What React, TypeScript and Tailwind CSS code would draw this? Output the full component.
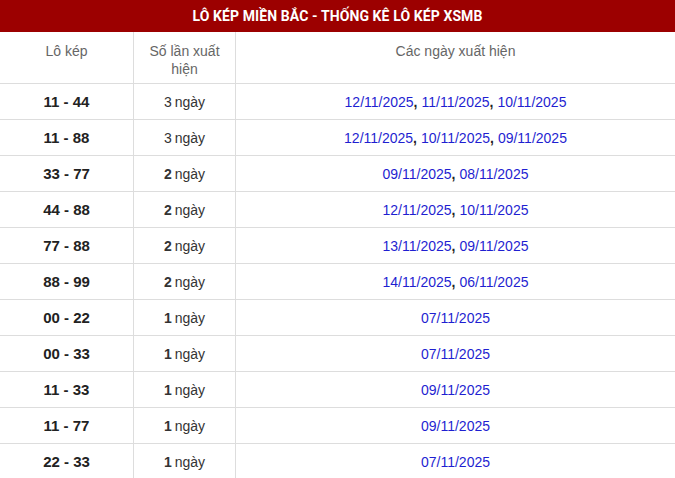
import React from 'react';

type Row = { pair: string; count: number; dates: string[] };

const rows: Row[] = [
  { pair: '11 - 44', count: 3, dates: ['12/11/2025', '11/11/2025', '10/11/2025'] },
  { pair: '11 - 88', count: 3, dates: ['12/11/2025', '10/11/2025', '09/11/2025'] },
  { pair: '33 - 77', count: 2, dates: ['09/11/2025', '08/11/2025'] },
  { pair: '44 - 88', count: 2, dates: ['12/11/2025', '10/11/2025'] },
  { pair: '77 - 88', count: 2, dates: ['13/11/2025', '09/11/2025'] },
  { pair: '88 - 99', count: 2, dates: ['14/11/2025', '06/11/2025'] },
  { pair: '00 - 22', count: 1, dates: ['07/11/2025'] },
  { pair: '00 - 33', count: 1, dates: ['07/11/2025'] },
  { pair: '11 - 33', count: 1, dates: ['09/11/2025'] },
  { pair: '11 - 77', count: 1, dates: ['09/11/2025'] },
  { pair: '22 - 33', count: 1, dates: ['07/11/2025'] },
];

export default function App() {
  return (
    <div className="w-[675px] h-[478px] overflow-hidden bg-white font-['Liberation_Sans',Arial,sans-serif]">
      {/* Title bar */}
      <div className="h-[32px] bg-[#9c0000] flex items-center justify-center">
        <h2 className="text-white font-bold text-[14px] font-['Roboto',sans-serif] tracking-[0.1px]">
          LÔ KÉP MIỀN BẮC - THỐNG KÊ LÔ KÉP XSMB
        </h2>
      </div>

      {/* Header row */}
      <div className="grid grid-cols-[134px_102px_1fr] h-[52px] border-b border-[#ddd] text-[14px] leading-[18px] text-[#666]">
        <div className="border-r border-[#ddd] pt-[10px] text-center">Lô kép</div>
        <div className="border-r border-[#ddd] pt-[10px] px-[14px] text-center">Số lần xuất hiện</div>
        <div className="pt-[10px] text-center">Các ngày xuất hiện</div>
      </div>

      {/* Data rows */}
      {rows.map((row) => (
        <div key={row.pair} className="grid grid-cols-[134px_102px_1fr] h-[36px] border-b border-[#ddd]">
          <div className="border-r border-[#ddd] pt-[2px] flex items-center justify-center text-[15px] font-bold text-[#222]">
            {row.pair}
          </div>
          <div className="border-r border-[#ddd] pt-[2px] flex items-center justify-center text-[14px] text-[#333]">
            <span className={row.count >= 3 ? 'font-normal' : 'font-bold'}>{row.count}</span>
            <span className="ml-[3px]">ngày</span>
          </div>
          <div className="pt-[2px] flex items-center justify-center text-[14px] text-[#1f1fd1]">
            {row.dates.map((d, i) => (
              <React.Fragment key={d}>
                {i > 0 && <span className="font-bold text-[#222] mr-[4px]">,</span>}
                <span>{d}</span>
              </React.Fragment>
            ))}
          </div>
        </div>
      ))}
    </div>
  );
}
